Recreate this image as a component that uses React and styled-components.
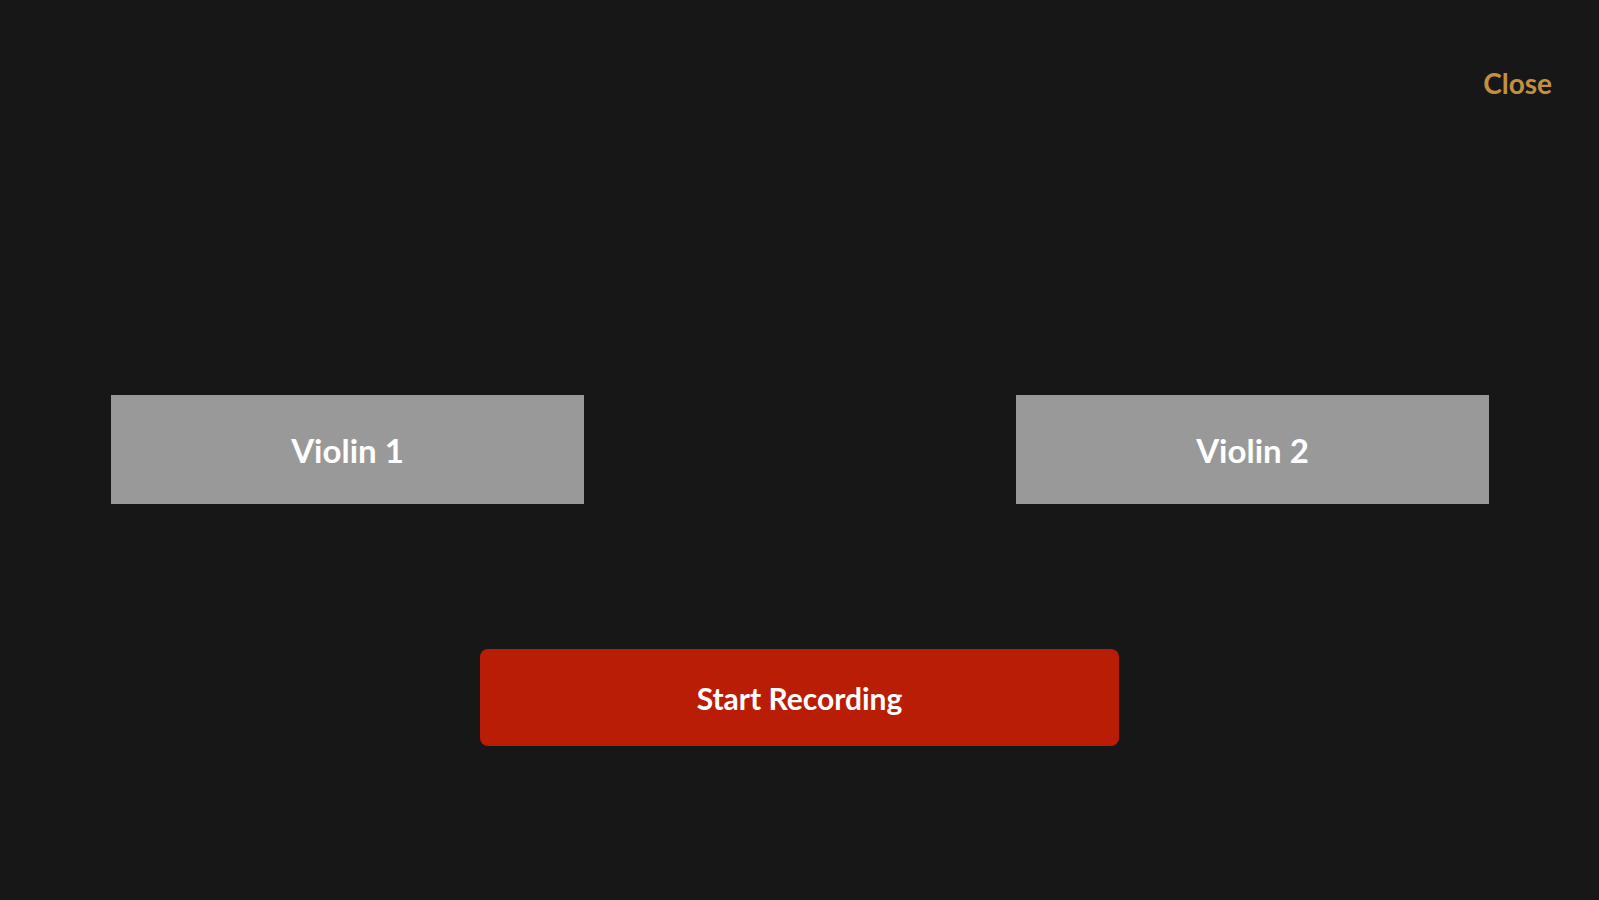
import React from "react";
import styled, {createGlobalStyle} from "styled-components";

const GlobalStyle=createGlobalStyle`
  html,body{
    margin:0;
    padding:0;
    background-color:#171717;
  }
  *{
    box-sizing:border-box;
  }
`;

const Page=styled.div`
  display:flex;
  flex-direction:column;
  min-height:100vh;
  background-color:#171717;
  font-family:Lato, "Open Sans", sans-serif;
`;

const TopBar=styled.div`
  display:flex;
  justify-content:flex-end;
  padding:67px 47px 0 0;
`;

const CloseBtn=styled.button`
  background:none;
  border:none;
  padding:0;
  font-family:inherit;
  font-size:28px;
  line-height:32px;
  font-weight:700;
  color:#c58f40;
  cursor:pointer;
`;

const ChoiceRow=styled.div`
  display:flex;
  justify-content:space-between;
  padding:0 110px 0 111px;
  margin-top:296px;
`;

const ChoiceBtn=styled.button`
  width:473px;
  height:109px;
  border:none;
  background-color:#999999;
  color:#ffffff;
  font-family:inherit;
  font-size:33px;
  font-weight:700;
  cursor:pointer;
`;

const RecordBtn=styled.button`
  align-self:center;
  width:639px;
  height:97px;
  margin-top:145px;
  border:none;
  border-radius:8px;
  background-color:#b91d06;
  color:#ffffff;
  font-family:inherit;
  font-size:30px;
  font-weight:700;
  cursor:pointer;
`;

function App(){
  return (
    <Page>
      <GlobalStyle/>
      <TopBar>
        <CloseBtn>Close</CloseBtn>
      </TopBar>
      <ChoiceRow>
        <ChoiceBtn>Violin 1</ChoiceBtn>
        <ChoiceBtn>Violin 2</ChoiceBtn>
      </ChoiceRow>
      <RecordBtn>Start Recording</RecordBtn>
    </Page>
  );
}

export default App;
